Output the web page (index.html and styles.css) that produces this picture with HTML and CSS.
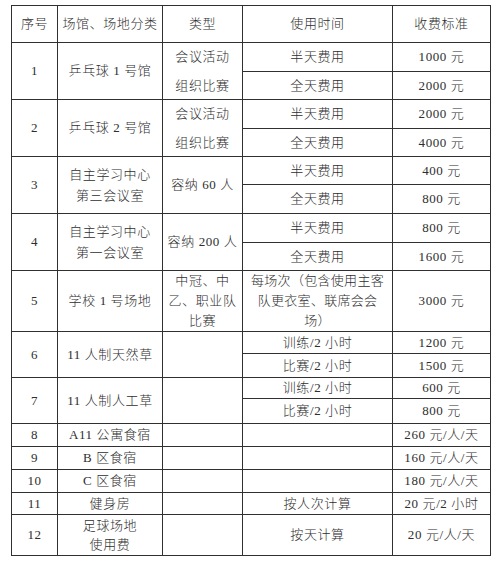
FILE: index.html
```html
<!DOCTYPE html>
<html lang="zh">
<head>
<meta charset="utf-8">
<link rel="stylesheet" href="styles.css">
</head>
<body>
<div class="page">
<div class="fees">
  <div class="cell">序号</div><div class="cell">场馆、场地分类</div><div class="cell">类型</div><div class="cell">使用时间</div><div class="cell">收费标准</div>

  <div class="cell s2">1</div><div class="cell s2">乒乓球 1 号馆</div><div class="cell s2 lh29">会议活动<br>组织比赛</div><div class="cell">半天费用</div><div class="cell">1000 元</div>
  <div class="cell">全天费用</div><div class="cell">2000 元</div>

  <div class="cell s2">2</div><div class="cell s2">乒乓球 2 号馆</div><div class="cell s2 lh29">会议活动<br>组织比赛</div><div class="cell">半天费用</div><div class="cell">2000 元</div>
  <div class="cell">全天费用</div><div class="cell">4000 元</div>

  <div class="cell s2">3</div><div class="cell s2 lh21">自主学习中心<br>第三会议室</div><div class="cell s2">容纳 60 人</div><div class="cell">半天费用</div><div class="cell">400 元</div>
  <div class="cell">全天费用</div><div class="cell">800 元</div>

  <div class="cell s2">4</div><div class="cell s2 lh21">自主学习中心<br>第一会议室</div><div class="cell s2">容纳 200 人</div><div class="cell">半天费用</div><div class="cell">800 元</div>
  <div class="cell">全天费用</div><div class="cell">1600 元</div>

  <div class="cell">5</div><div class="cell">学校 1 号场地</div><div class="cell lh20">中冠、中<br>乙、职业队<br>比赛</div><div class="cell lh20 tight">每场次（包含使用主客<br>队更衣室、联席会会<br>场）</div><div class="cell">3000 元</div>

  <div class="cell s2">6</div><div class="cell s2">11 人制天然草</div><div class="cell s2"></div><div class="cell">训练/2 小时</div><div class="cell">1200 元</div>
  <div class="cell">比赛/2 小时</div><div class="cell">1500 元</div>

  <div class="cell s2">7</div><div class="cell s2">11 人制人工草</div><div class="cell s2"></div><div class="cell">训练/2 小时</div><div class="cell">600 元</div>
  <div class="cell">比赛/2 小时</div><div class="cell">800 元</div>

  <div class="cell">8</div><div class="cell">A11 公寓食宿</div><div class="cell"></div><div class="cell"></div><div class="cell">260 元/人/天</div>
  <div class="cell">9</div><div class="cell">B 区食宿</div><div class="cell"></div><div class="cell"></div><div class="cell">160 元/人/天</div>
  <div class="cell">10</div><div class="cell">C 区食宿</div><div class="cell"></div><div class="cell"></div><div class="cell">180 元/人/天</div>
  <div class="cell">11</div><div class="cell">健身房</div><div class="cell"></div><div class="cell">按人次计算</div><div class="cell">20 元/2 小时</div>
  <div class="cell">12</div><div class="cell lh19">足球场地<br>使用费</div><div class="cell"></div><div class="cell">按天计算</div><div class="cell">20 元/人/天</div>
</div>
</div>
</body>
</html>
```

FILE: styles.css
```css
html, body {
  margin: 0;
  padding: 0;
  background: #ffffff;
}

.page {
  padding: 5px 0 0 11px;
}

.fees {
  display: grid;
  width: max-content;
  grid-template-columns: 45px 104px 79px 149px 97px;
  grid-template-rows: 36px 28px 27px 28px 27px 27px 28px 28px 27px 60px 21px 23px 20px 24px 22px 22px 22px 21px 40px;
  gap: 1px;
  padding: 1px;
  background: #303030;
  font-family: "Liberation Serif", "Noto Sans CJK SC", serif;
  font-size: 13px;
  font-weight: 300;
  letter-spacing: 0.6px;
  color: #2e2e2e;
}

.cell {
  background: #ffffff;
  display: flex;
  align-items: center;
  justify-content: center;
  text-align: center;
  line-height: 16px;
  white-space: nowrap;
}

.s2 { grid-row: span 2; }

.lh29 { line-height: 29px; }
.lh21 { line-height: 21px; }
.lh20 { line-height: 20px; }
.lh19 { line-height: 19px; }
.tight { letter-spacing: 0.3px; }
```
